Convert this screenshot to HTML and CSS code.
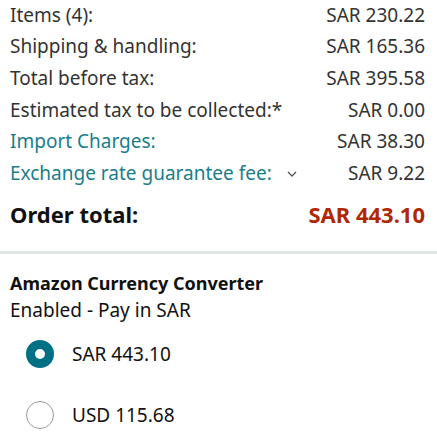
FILE: index.html
```html
<!DOCTYPE html>
<html lang="en">
<head>
  <meta charset="UTF-8">
  <title>Order summary</title>
  <link rel="stylesheet" href="styles.css">
</head>
<body>

<div class="yhteenveto">
  <div class="rivi"><span>Items (4):</span><span>SAR 230.22</span></div>
  <div class="rivi"><span>Shipping &amp; handling:</span><span>SAR 165.36</span></div>
  <div class="rivi"><span>Total before tax:</span><span>SAR 395.58</span></div>
  <div class="rivi"><span>Estimated tax to be collected:*</span><span>SAR 0.00</span></div>
  <div class="rivi"><span class="linkki">Import Charges:</span><span>SAR 38.30</span></div>
  <div class="rivi">
    <span class="linkki">Exchange rate guarantee fee:
      <svg class="nuoli" width="10" height="6" viewBox="0 0 10 6"><path d="M1 1 L5 5 L9 1" fill="none" stroke="#555" stroke-width="1.3"/></svg>
    </span>
    <span>SAR 9.22</span>
  </div>
  <div class="rivi yhteensa"><span>Order total:</span><span class="hinta">SAR 443.10</span></div>
</div>

<div class="valuutta">
  <div class="otsikko">Amazon Currency Converter</div>
  <div class="tila">Enabled - Pay in SAR</div>
  <div class="vaihtoehto"><span class="radio valittu"></span>SAR 443.10</div>
  <div class="vaihtoehto"><span class="radio"></span>USD 115.68</div>
</div>

</body>
</html>
```

FILE: styles.css
```css
body {
  margin: 0;
  font-family: "Noto Sans", sans-serif;
  color: #333;
  background: #fff;
}
.yhteenveto {
  padding: 0 12px 0 10px;
  border-bottom: 3px solid #e3e6e6;
}
.rivi {
  display: flex;
  justify-content: space-between;
  align-items: center;
  font-size: 19px;
  height: 31.6px;
}
.rivi:first-child {
  margin-top: -1px;
}
.linkki {
  color: #1b7d8c;
}
.nuoli {
  margin-left: 10px;
  vertical-align: 3px;
}
.yhteensa {
  font-weight: bold;
  font-size: 22px;
  color: #111;
  height: 50px;
  margin-bottom: 12px;
}
.hinta {
  color: #b12704;
}
.valuutta {
  padding: 16px 12px 0 10px;
  color: #111;
}
.otsikko {
  font-weight: bold;
  font-size: 18px;
  line-height: 26px;
}
.tila {
  font-size: 19px;
  line-height: 28px;
}
.vaihtoehto {
  display: flex;
  align-items: center;
  font-size: 19px;
  height: 61px;
}
.vaihtoehto:first-of-type {
  margin-top: 5px;
}
.radio {
  box-sizing: border-box;
  width: 28px;
  height: 28px;
  border-radius: 50%;
  border: 1px solid #999;
  margin: 0 18px 0 16px;
}
.radio.valittu {
  border: 9px solid #007185;
}
```
